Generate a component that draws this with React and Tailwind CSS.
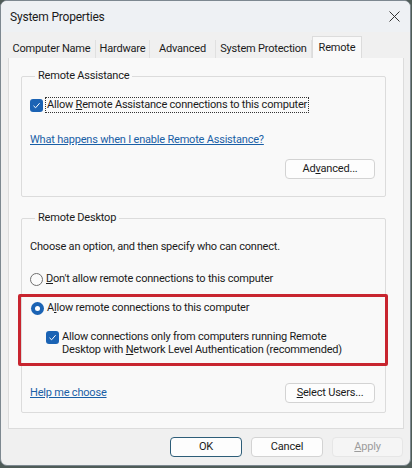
import React from 'react';

// Win11 style "System Properties" dialog, Remote tab
const tabs = [
  { label: 'Computer Name', w: 'w-[88px]' },
  { label: 'Hardware', w: 'w-[54px]' },
  { label: 'Advanced', w: 'w-[66px]' },
  { label: 'System Protection', w: 'w-[96px]' },
];

const CheckBox = () => (
  <span className="w-[13px] h-[13px] rounded-[3px] bg-[#1b63b4] flex items-center justify-center shrink-0">
    <svg width="9" height="9" viewBox="0 0 9 9">
      <path d="M1.5 4.8 L3.6 6.8 L7.6 2.2" stroke="white" strokeWidth="1" fill="none" />
    </svg>
  </span>
);

const Radio = ({ checked }) =>
  checked ? (
    <span className="w-[13px] h-[13px] rounded-full bg-[#1b63b4] flex items-center justify-center shrink-0">
      <span className="w-[5px] h-[5px] rounded-full bg-white" />
    </span>
  ) : (
    <span className="w-[13px] h-[13px] rounded-full border border-[#6f6f6f] bg-[#fbfbfb] shrink-0" />
  );

const Button = ({ children, className = 'w-[90px] border-[#d3d3d3] bg-[#fdfdfd] text-[#1b1b1b]' }) => (
  <div className={'h-[20px] flex items-center justify-center rounded-[4px] border ' + className}>{children}</div>
);

const GroupBox = ({ title, children, className = '' }) => (
  <fieldset className={'border border-[#dcdcdc] rounded-[2px] px-[8px] ' + className}>
    <legend className="ml-[5px] px-[3px] leading-[16px]">{title}</legend>
    {children}
  </fieldset>
);

export default function App() {
  return (
    <div
      className="w-[412px] h-[468px] bg-[#4f5c58] text-[11px] tracking-[-0.2px] text-[#1b1b1b] whitespace-nowrap"
      style={{ fontFamily: 'Roboto, "Liberation Sans", Arial, sans-serif' }}
    >
      <div className="w-[411px] h-[466px] rounded-[7px] border border-[#7d8890] bg-[#f0f0f0] flex flex-col overflow-hidden">
        {/* title bar */}
        <div className="h-[31px] flex items-center justify-between pl-[9px] pr-[10px] bg-[#eef1f4]">
          <span className="text-[12px] text-[#1b1b1b]">System Properties</span>
          <svg width="11" height="11" viewBox="0 0 11 11">
            <path d="M0.5 0.5 L10.5 10.5 M10.5 0.5 L0.5 10.5" stroke="#333" strokeWidth="1" />
          </svg>
        </div>

        <div className="px-[7px] pt-[4px] flex flex-col">
          {/* tabs */}
          <div className="flex items-end h-[22px]">
            {tabs.map((t) => (
              <div
                key={t.label}
                className={t.w + ' h-[18px] flex items-center justify-center border-r border-[#e0e0e0] bg-[#f0f0f0] text-[#1b1b1b]'}
              >
                {t.label}
              </div>
            ))}
            <div className="w-[50px] h-[22px] flex items-start justify-center pt-[3px] bg-[#f9f9f9] border border-b-0 border-[#dcdcdc]">
              Remote
            </div>
          </div>

          {/* panel */}
          <div className="h-[371px] w-[396px] bg-[#f9f9f9] border border-t-0 border-[#dcdcdc] px-[12px] pt-[10px] flex flex-col">
            <GroupBox title="Remote Assistance" className="w-[365px] h-[129px]">
              <div className="flex items-center gap-[2px] mt-[13px]">
                <CheckBox />
                <span className="border border-dotted border-[#333] px-[1px] leading-[14px]">
                  Allow <span className="underline">R</span>emote Assistance connections to this computer
                </span>
              </div>
              <div className="mt-[19px] text-[#1a5fa6] underline leading-[16px]">
                What happens when I enable Remote Assistance?
              </div>
              <div className="flex justify-end mt-[11px] pr-[2px]">
                <Button>
                  Ad<span className="underline">v</span>anced...
                </Button>
              </div>
            </GroupBox>

            <GroupBox title="Remote Desktop" className="w-[365px] h-[203px] mt-[13px]">
              <div className="mt-[13px] leading-[16px]">Choose an option, and then specify who can connect.</div>
              <div className="flex items-center gap-[3px] mt-[16px] leading-[16px]">
                <Radio />
                <span>
                  <span className="underline">D</span>on't allow remote connections to this computer
                </span>
              </div>
              <div className="-ml-[12px] -mr-[11px] mt-[7px] border-[3px] border-[#c8252f] rounded-[2px] pl-[10px] pt-[3px] pb-[7px]">
                <div className="flex items-center gap-[3px] leading-[16px]">
                  <Radio checked />
                  <span>
                    A<span className="underline">l</span>low remote connections to this computer
                  </span>
                </div>
                <div className="flex items-start gap-[3px] mt-[14px] ml-[15px] leading-[13px]">
                  <span className="mt-[1px]">
                    <CheckBox />
                  </span>
                  <span>
                    Allow connections only from computers running Remote
                    <br />
                    Desktop with <span className="underline">N</span>etwork Level Authentication (recommended)
                  </span>
                </div>
              </div>
              <div className="flex items-center justify-between mt-[17px] pr-[2px]">
                <span className="text-[#1a5fa6] underline">Help me choose</span>
                <Button>
                  <span className="underline">S</span>elect Users...
                </Button>
              </div>
            </GroupBox>
          </div>

          {/* bottom buttons */}
          <div className="flex justify-end gap-[9px] mt-[8px]">
            <Button className="w-[72px] border-[#2d5d78] bg-[#fdfdfd] text-[#1b1b1b]">OK</Button>
            <Button className="w-[72px] border-[#d3d3d3] bg-[#fdfdfd] text-[#1b1b1b]">Cancel</Button>
            <Button className="w-[71px] border-[#e6e6e6] bg-[#f5f5f5] text-[#9c9c9c]">
              <span className="underline">A</span>pply
            </Button>
          </div>
        </div>
      </div>
    </div>
  );
}
